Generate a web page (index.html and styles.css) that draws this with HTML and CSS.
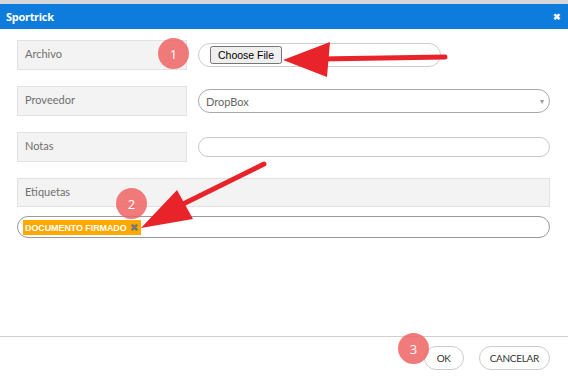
FILE: index.html
```html
<!DOCTYPE html>
<html lang="es">

<head>
    <meta charset="UTF-8">
    <title>Sportrick</title>
    <link rel="stylesheet" href="styles.css">
</head>

<body>
    <div class="topstrip"></div>

    <!-- Modal header -->
    <header class="modal-header">
        <span class="modal-title">Sportrick</span>
        <span class="modal-close">&#10006;</span>
    </header>

    <div class="modal-body">
        <div class="form-row">
            <div class="field-label">Archivo</div>
            <div class="field-input">
                <div class="file-wrap"><input type="file" class="file-input"></div>
            </div>
        </div>

        <div class="form-row">
            <div class="field-label">Proveedor</div>
            <div class="field-input">
                <div class="select-box">
                    <span>DropBox</span>
                    <span class="caret">&#9662;</span>
                </div>
            </div>
        </div>

        <div class="form-row">
            <div class="field-label">Notas</div>
            <div class="field-input">
                <div class="text-box"></div>
            </div>
        </div>

        <div class="field-label wide">Etiquetas</div>
        <div class="tags-box">
            <span class="tag">DOCUMENTO FIRMADO <span class="tag-x">&#10006;</span></span>
        </div>
    </div>

    <!-- Footer -->
    <footer class="modal-footer">
        <button class="btn">OK</button>
        <button class="btn">CANCELAR</button>
    </footer>

    <!-- annotations laid over the screenshot -->
    <div class="badge badge-1">1</div>
    <div class="badge badge-2">2</div>
    <div class="badge badge-3">3</div>

    <svg class="arrows" width="568" height="377" viewBox="0 0 568 377">
        <line x1="445" y1="57" x2="320" y2="59" stroke="#e8242a" stroke-width="5" stroke-linecap="round" />
        <polygon points="283,60 330,42 327,77" fill="#e8242a" />
        <line x1="264" y1="164" x2="175" y2="208" stroke="#e8242a" stroke-width="5" stroke-linecap="round" />
        <polygon points="141,228 177,190 193,219" fill="#e8242a" />
    </svg>
</body>

</html>
```

FILE: styles.css
```css
body {
    margin: 0;
    padding: 0;
    width: 568px;
    height: 377px;
    background-color: #ffffff;
    font-family: Lato, "Open Sans", Arial, sans-serif;
    color: #333;
    position: relative;
    overflow: hidden;
}

.topstrip {
    height: 4px;
    background-color: #d7d7da;
}

/* Header */
.modal-header {
    height: 25px;
    background-color: #0e7cdc;
    color: white;
    display: flex;
    align-items: center;
    justify-content: space-between;
    padding: 0 7px 0 6px;
}

.modal-title {
    font-family: "Open Sans", Arial, sans-serif;
    font-weight: bold;
    font-size: 11px;
    letter-spacing: -0.3px;
}

.modal-close {
    font-size: 9px;
    font-weight: bold;
}

/* Body */
.modal-body {
    padding: 11px 18px 0 17px;
    height: 308px;
    box-sizing: border-box;
    border-bottom: 1px solid #cfcfcf;
}

.form-row {
    display: flex;
    align-items: center;
    gap: 11px;
    margin-bottom: 16px;
}

.field-label {
    width: 170px;
    height: 30px;
    box-sizing: border-box;
    background-color: #f3f3f3;
    border: 1px solid #e2e2e2;
    padding: 0 0 3px 7px;
    display: flex;
    align-items: center;
    font-size: 11px;
    color: #6f6f6f;
    flex-shrink: 0;
}

.field-label.wide {
    width: 100%;
    height: 29px;
}

.field-input {
    flex: 1;
}

.file-wrap {
    width: 243px;
    height: 24px;
    box-sizing: border-box;
    border: 1px solid #cccccc;
    border-radius: 12px;
    display: flex;
    align-items: center;
    padding-left: 11px;
    overflow: hidden;
}

.file-input {
    font-family: Arial, sans-serif;
    font-size: 10px;
    color: transparent;
}

.file-input::file-selector-button {
    color: #000;
    font-size: 10.5px;
}

.select-box {
    height: 24px;
    box-sizing: border-box;
    border: 1px solid #a9a9a9;
    border-radius: 12px;
    display: flex;
    align-items: center;
    justify-content: space-between;
    padding: 0 5px 0 7px;
    font-size: 11px;
    color: #666;
}

.caret {
    font-size: 8px;
    color: #999;
}

.text-box {
    height: 20px;
    box-sizing: border-box;
    border: 1px solid #c8c8c8;
    border-radius: 10px;
}

.tags-box {
    margin-top: 9px;
    height: 22px;
    box-sizing: border-box;
    border: 1px solid #999;
    border-radius: 11px;
    display: flex;
    align-items: center;
    padding-left: 5px;
}

.tag {
    background-color: #ffa800;
    color: white;
    font-family: "Liberation Sans", Arial, sans-serif;
    font-weight: bold;
    font-size: 9px;
    letter-spacing: -0.1px;
    padding: 2px 3px 2px 2px;
}

.tag-x {
    color: #777;
    font-size: 10px;
    margin-left: 1px;
}

/* Footer */
.modal-footer {
    display: flex;
    justify-content: flex-end;
    gap: 15px;
    padding: 9px 18px 0 0;
}

.btn {
    height: 24px;
    border: 1px solid #cccccc;
    border-radius: 12px;
    background-color: white;
    font-family: Lato, Arial, sans-serif;
    font-size: 10px;
    letter-spacing: -0.3px;
    color: #333;
    padding: 0 10px;
    cursor: pointer;
}

.btn:first-child {
    padding: 0 12px;
}

/* Annotation badges */
.badge {
    position: absolute;
    width: 31px;
    height: 31px;
    border-radius: 50%;
    background-color: rgba(238, 100, 100, 0.85);
    color: white;
    font-family: "Open Sans", Arial, sans-serif;
    font-size: 13px;
    display: flex;
    align-items: center;
    justify-content: center;
}

.badge-1 {
    left: 158px;
    top: 38px;
}

.badge-2 {
    left: 116px;
    top: 188px;
}

.badge-3 {
    left: 398px;
    top: 333px;
}

.arrows {
    position: absolute;
    left: 0;
    top: 0;
}
```
